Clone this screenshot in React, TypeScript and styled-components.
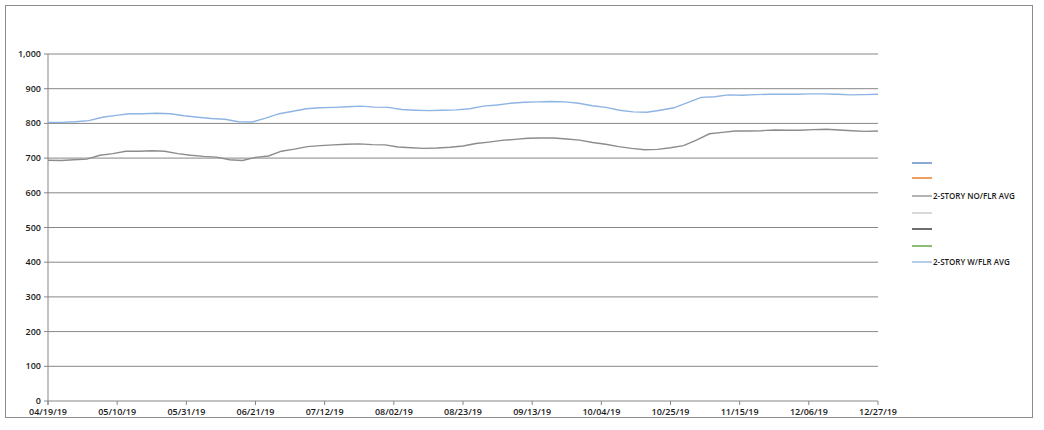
import React from "react";
import styled, { createGlobalStyle } from "styled-components";

const Global = createGlobalStyle`
  body { margin: 0; background: #fff; font-family: "Open Sans", "Liberation Sans", sans-serif; }
`;

const Frame = styled.div`
  margin: 5px 0 0 5px;
  width: 1028px;
  height: 413px;
  border: 1px solid #8c8c8c;
  box-sizing: border-box;
`;

const Chart = styled.svg`
  display: block;
  font-family: "Open Sans", "Liberation Sans", sans-serif;
  font-size: 9px;
  font-weight: 600;
  fill: #1a1a1a;
`;

const W = [803, 803, 805, 808, 818, 823, 828, 828, 829, 828, 822, 818, 814, 812, 805, 804, 815, 828, 835, 842, 845, 846, 848, 850, 847, 846, 840, 838, 837, 838, 839, 842, 850, 853, 858, 861, 862, 863, 862, 858, 851, 846, 838, 833, 832, 838, 845, 860, 875, 877, 882, 881, 883, 884, 884, 884, 885, 885, 884, 882, 883, 884];
const N = [694, 693, 695, 697, 708, 713, 720, 720, 721, 720, 713, 708, 705, 703, 695, 693, 702, 706, 720, 726, 733, 736, 738, 740, 741, 739, 738, 732, 730, 728, 729, 731, 735, 742, 746, 751, 754, 757, 758, 758, 755, 752, 745, 740, 733, 728, 724, 725, 730, 736, 752, 770, 774, 778, 778, 779, 781, 780, 780, 782, 783, 781, 779, 777, 778];

const X0 = 42, X1 = 872, Y0 = 395, YTOP = 48;
const y = (v: number) => Y0 - (v / 1000) * (Y0 - YTOP);
const path = (d: number[]) =>
  d.map((v, i) => `${i ? "L" : "M"}${(X0 + (i * (X1 - X0)) / (d.length - 1)).toFixed(1)},${y(v).toFixed(1)}`).join(" ");

const dates = ["04/19/19", "05/10/19", "05/31/19", "06/21/19", "07/12/19", "08/02/19", "08/23/19", "09/13/19", "10/04/19", "10/25/19", "11/15/19", "12/06/19", "12/27/19"];

const legend = [
  { c: "#4a7ebb", t: "" },
  { c: "#e46c0a", t: "" },
  { c: "#8c8c8c", t: "2-STORY NO/FLR AVG" },
  { c: "#c3c3c3", t: "" },
  { c: "#1f1f1f", t: "" },
  { c: "#4e9a29", t: "" },
  { c: "#8eb4e3", t: "2-STORY W/FLR AVG" },
];
const legY = [157, 172, 190, 207, 223, 240, 256];

export default function App() {
  return (
    <>
      <Global />
      <Frame>
        <Chart width={1026} height={411}>
          {Array.from({ length: 11 }, (_, i) => (
            <g key={i}>
              <line x1={X0 - 4} x2={X1} y1={y(i * 100)} y2={y(i * 100)} stroke="#878787" strokeWidth={1} />
              <text x={X0 - 7} y={y(i * 100) + 3} textAnchor="end">{i === 10 ? "1,000" : i * 100}</text>
            </g>
          ))}
          <line x1={X0} x2={X0} y1={YTOP} y2={Y0 + 4} stroke="#878787" />
          {dates.map((d, i) => {
            const x = X0 + (i * (X1 - X0)) / 12;
            return (
              <g key={d}>
                <line x1={x} x2={x} y1={Y0} y2={Y0 + 4} stroke="#878787" />
                <text x={x} y={Y0 + 14} textAnchor="middle">{d}</text>
              </g>
            );
          })}
          <path d={path(W)} fill="none" stroke="#8eb4e3" strokeWidth={1.4} />
          <path d={path(N)} fill="none" stroke="#8c8c8c" strokeWidth={1.4} />
          {legend.map((l, i) => (
            <g key={i}>
              <line x1={906} x2={926} y1={legY[i]} y2={legY[i]} stroke={l.c} strokeWidth={1.3} />
              <text x={927} y={legY[i] + 3} fontSize={8}>{l.t}</text>
            </g>
          ))}
        </Chart>
      </Frame>
    </>
  );
}
